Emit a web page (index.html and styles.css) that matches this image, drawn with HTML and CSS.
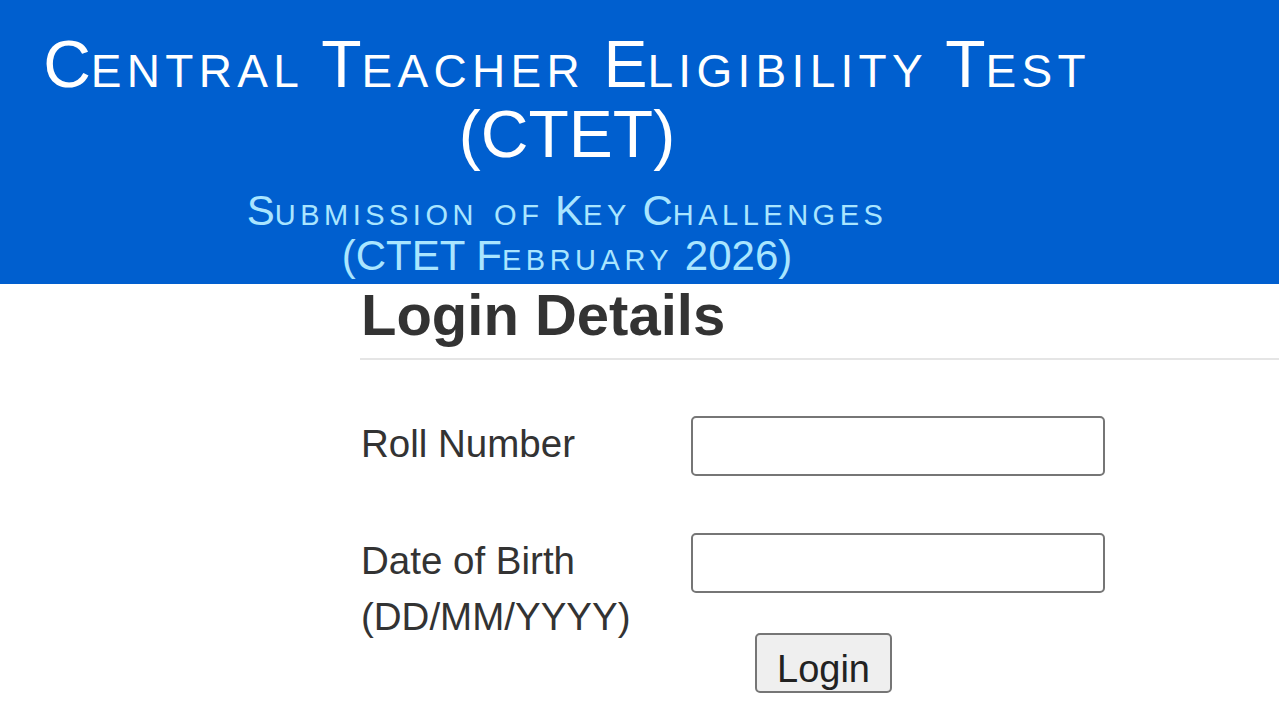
FILE: index.html
```html
<!DOCTYPE html>
<html lang="en">
<head>
  <meta charset="UTF-8" />
  <meta name="viewport" content="width=device-width, initial-scale=1.0"/>
  <title>CTET - Submission of Key Challenges</title>
  <link rel="stylesheet" href="styles.css">
</head>
<body>

<header class="banner">
  <h1 class="banner-title">C<span class="sc">entral</span> T<span class="sc">eacher</span> E<span class="sc">ligibility</span> T<span class="sc">est</span><br>(CTET)</h1>
  <p class="banner-sub">S<span class="sc">ubmission of</span> K<span class="sc">ey</span> C<span class="sc">hallenges</span><br>(CTET F<span class="sc">ebruary</span> 2026)</p>
</header>

<main class="login">
  <h2 class="login-head">Login Details</h2>

  <form class="login-form" action="#" method="POST" autocomplete="off">
    <div class="form-row">
      <label for="rollno">Roll Number</label>
      <div class="field">
        <input type="text" id="rollno" name="rollno" />
      </div>
    </div>

    <div class="form-row">
      <label for="dob">Date of Birth<br>(DD/MM/YYYY)</label>
      <div class="field">
        <input type="text" id="dob" name="dob" />
        <button type="submit">Login</button>
      </div>
    </div>
  </form>
</main>

</body>
</html>
```

FILE: styles.css
```css
* {
  box-sizing: border-box;
}

body {
  margin: 0;
  font-family: "Liberation Sans", Arial, sans-serif;
  background: #fff;
  color: #333;
}

/* bandeau bleu */
.banner {
  background-color: #005fcf;
  height: 284px;
  padding: 29px 145px 0 0;
  text-align: center;
  font-variant: small-caps;
}

.banner-title {
  margin: 0;
  font-size: 66px;
  line-height: 70px;
  font-weight: normal;
  color: #fff;
}

/* les petites capitales de l'original sont plus larges */
.banner-title .sc {
  letter-spacing: 5.3px;
}

.banner-sub {
  margin: 19px 0 0;
  font-size: 42px;
  line-height: 45px;
  color: #a9e5ff;
}

.banner-sub .sc {
  letter-spacing: 4.5px;
}

/* zone de connexion */
.login {
  padding-left: 360px;
}

.login-head {
  margin: 0;
  font-size: 58px;
  line-height: 62px;
  font-weight: bold;
  color: #333;
  padding: 0 0 12px 1px;
  border-bottom: 2px solid #e5e5e5;
}

.login-form {
  padding-top: 56px;
  display: flex;
  flex-direction: column;
  gap: 57px;
}

.form-row {
  display: flex;
  align-items: flex-start;
}

.form-row label {
  width: 331px;
  padding-left: 1px;
  font-size: 38.5px;
  line-height: 56px;
  color: #333;
}

.field {
  display: flex;
  flex-direction: column;
  align-items: flex-start;
}

.field input {
  width: 414px;
  height: 60px;
  border: 2px solid #767676;
  border-radius: 5px;
  font-size: 30px;
  padding: 0 10px;
  margin: 0;
}

.field button {
  margin: 40px 0 0 64px;
  width: 137px;
  height: 60px;
  padding: 12px 0 0;
  font-family: inherit;
  font-size: 38px;
  color: #222;
  background: #efefef;
  border: 2px solid #767676;
  border-radius: 5px;
  cursor: pointer;
}
```
